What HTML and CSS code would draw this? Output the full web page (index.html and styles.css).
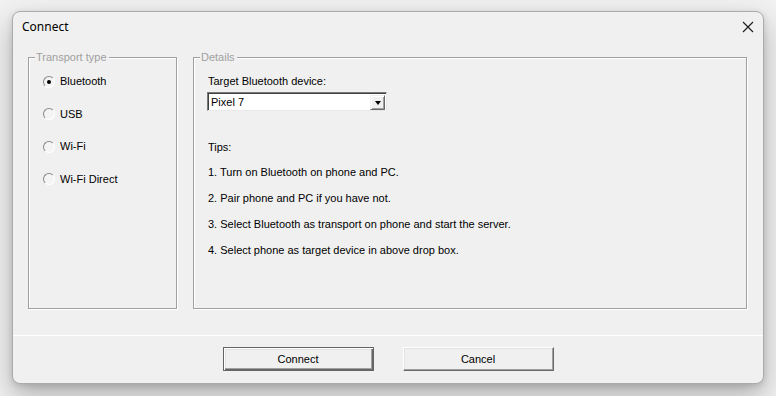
FILE: index.html
```html
<!DOCTYPE html>
<html>
<head>
<meta charset="utf-8">
<title>Connect</title>
<link rel="stylesheet" href="styles.css">
</head>
<body>
<div class="window">
  <div class="titlebar">
    <span class="title">Connect</span>
    <span class="close" aria-label="Close">
      <svg width="12" height="12" viewBox="0 0 12 12"><path d="M1 1L11 11M11 1L1 11" stroke="#1a1a1a" stroke-width="1.1" fill="none"/></svg>
    </span>
  </div>
  <div class="content">
    <div class="group transport">
      <span class="legend">Transport type</span>
      <div class="radios">
        <label class="radio"><span class="dot checked"></span>Bluetooth</label>
        <label class="radio"><span class="dot"></span>USB</label>
        <label class="radio"><span class="dot"></span>Wi-Fi</label>
        <label class="radio"><span class="dot"></span>Wi-Fi Direct</label>
      </div>
    </div>
    <div class="group details">
      <span class="legend">Details</span>
      <div class="details-body">
        <div class="field-label">Target Bluetooth device:</div>
        <div class="combo">
          <span class="combo-text">Pixel 7</span>
          <span class="combo-btn"><span class="arrow"></span></span>
        </div>
        <div class="tips">
          <p class="tips-head">Tips:</p>
          <p>1. Turn on Bluetooth on phone and PC.</p>
          <p>2. Pair phone and PC if you have not.</p>
          <p>3. Select Bluetooth as transport on phone and start the server.</p>
          <p>4. Select phone as target device in above drop box.</p>
        </div>
      </div>
    </div>
  </div>
  <div class="footer">
    <button class="btn default">Connect</button>
    <button class="btn">Cancel</button>
  </div>
</div>
</body>
</html>
```
FILE: styles.css
```css
html, body {
  margin: 0;
  padding: 0;
}
body {
  width: 776px;
  height: 396px;
  overflow: hidden;
  background: #f1f1f1;
  font-family: "Liberation Sans", Arial, sans-serif;
  font-size: 11px;
  color: #000;
}
.window {
  margin: 11px 0 0 12px;
  width: 750px;
  height: 371px;
  border: 1px solid #ababab;
  border-radius: 8px;
  background: #f0f0f0;
  box-shadow: 0 12px 28px rgba(0, 0, 0, 0.28), 0 2px 6px rgba(0, 0, 0, 0.12);
  display: flex;
  flex-direction: column;
  overflow: hidden;
}
.titlebar {
  height: 32px;
  display: flex;
  align-items: center;
  justify-content: space-between;
  padding-left: 9px;
  padding-right: 8px;
}
.title {
  font-family: "Noto Sans", "Open Sans", sans-serif;
  font-size: 12px;
  color: #000;
  margin-top: -3px;
}
.close {
  display: flex;
  width: 12px;
  height: 12px;
  margin-right: 1px;
  margin-top: -3px;
}
.content {
  flex: 1;
  display: flex;
  gap: 16px;
  padding: 13px 15px 0 15px;
}
.group {
  height: 252px;
  box-sizing: border-box;
  border: 1px solid #a0a0a0;
  box-shadow: 1px 1px 0 #fff, inset 1px 1px 0 #fff;
  display: flex;
  flex-direction: column;
}
.transport {
  width: 149px;
}
.details {
  width: 554px;
}
.legend {
  align-self: flex-start;
  margin-top: -7px;
  margin-left: 6px;
  padding: 0 2px 0 1px;
  background: #f0f0f0;
  color: #a0a0a0;
  line-height: 13px;
}
.radios {
  display: flex;
  flex-direction: column;
  gap: 19.5px;
  padding: 11px 0 0 14px;
}
.radio {
  display: flex;
  align-items: center;
  gap: 5px;
  height: 13px;
  line-height: 13px;
}
.dot {
  width: 10px;
  height: 10px;
  border-radius: 50%;
  border: 1px solid;
  border-color: #8a8a8a #ffffff #ffffff #8a8a8a;
  background: #f4f4f4;
  display: flex;
  align-items: center;
  justify-content: center;
}
.dot.checked::after {
  content: "";
  width: 4px;
  height: 4px;
  border-radius: 50%;
  background: #000;
}
.details-body {
  padding: 11px 0 0 14px;
  display: flex;
  flex-direction: column;
}
.field-label {
  line-height: 13px;
}
.combo {
  margin-top: 4px;
  width: 180px;
  height: 19px;
  box-sizing: border-box;
  border: 1px solid;
  border-color: #7a7a7a #e8e8e8 #e8e8e8 #7a7a7a;
  box-shadow: inset 1px 1px 0 #404040;
  background: #fff;
  display: flex;
  align-items: center;
  justify-content: space-between;
  padding: 0 1px 0 3px;
  margin-left: -1px;
}
.combo-text {
  line-height: 13px;
  padding-top: 1px;
}
.combo-btn {
  width: 15px;
  height: 15px;
  box-sizing: border-box;
  background: #f0f0f0;
  border: 1px solid;
  border-color: #f0f0f0 #696969 #696969 #f0f0f0;
  box-shadow: inset 1px 1px 0 #fff, inset -1px -1px 0 #a0a0a0;
  display: flex;
  align-items: center;
  justify-content: center;
  margin-top: 1px;
}
.arrow {
  width: 0;
  height: 0;
  border-left: 3.5px solid transparent;
  border-right: 3.5px solid transparent;
  border-top: 4px solid #000;
  margin-top: 1px;
}
.tips {
  margin-top: 30px;
  display: flex;
  flex-direction: column;
  gap: 13px;
}
.tips p {
  margin: 0;
  line-height: 13px;
}
.tips .tips-head {
  margin-bottom: -1px;
}
.footer {
  height: 36px;
  border-top: 1px solid #fff;
  display: flex;
  justify-content: center;
  gap: 29px;
  padding-top: 11px;
  box-sizing: content-box;
}
.btn {
  width: 151px;
  height: 24px;
  box-sizing: border-box;
  background: #f0f0f0;
  font-family: "Liberation Sans", Arial, sans-serif;
  font-size: 11px;
  color: #000;
  border: 1px solid;
  border-color: #ffffff #696969 #696969 #ffffff;
  box-shadow: inset -1px -1px 0 #a0a0a0, inset 1px 1px 0 #e3e3e3;
  padding: 0;
  margin: 0;
}
.btn.default {
  border-color: #646464;
  box-shadow: inset 1px 1px 0 #fff, inset -1px -1px 0 #696969, inset -2px -2px 0 #a0a0a0, inset 2px 2px 0 #e3e3e3;
}
```
